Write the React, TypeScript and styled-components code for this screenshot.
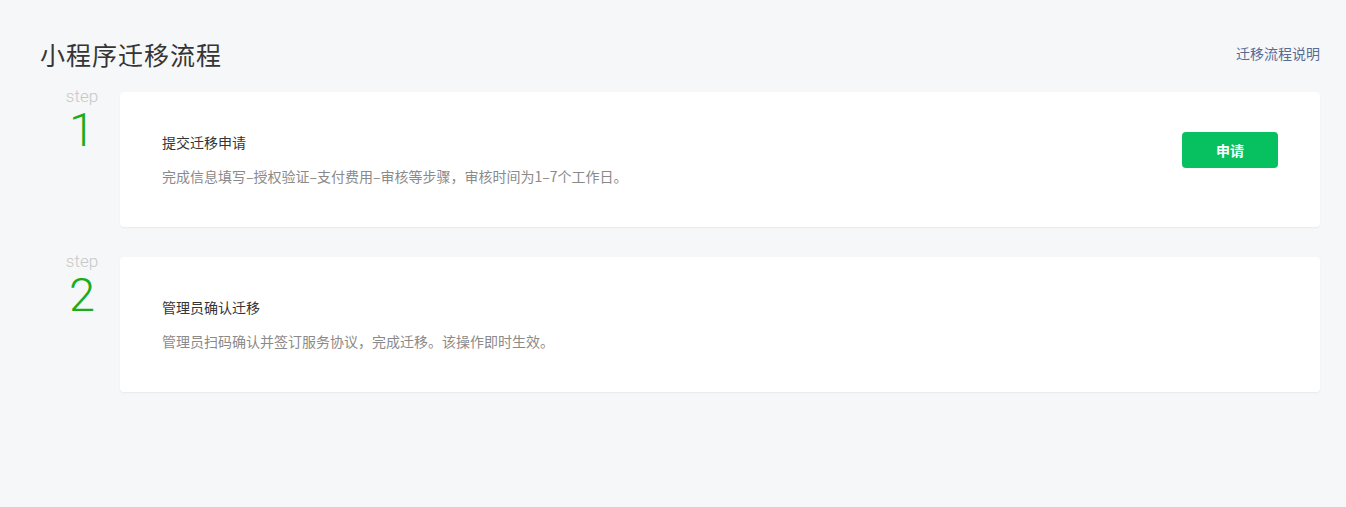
import React from "react";
import styled, { createGlobalStyle } from "styled-components";

const GlobalStyle = createGlobalStyle`
  html, body {
    margin: 0;
    padding: 0;
    background: #f6f7f9;
    font-family: "Noto Sans CJK SC", "Noto Sans", sans-serif;
  }
`;

const Page = styled.div`
  padding: 32px 26px 0 40px;
  min-height: 475px;
  box-sizing: border-box;
`;

const Header = styled.header`
  display: flex;
  justify-content: space-between;
  align-items: center;
  height: 44px;
  margin-bottom: 16px;
`;

const Title = styled.h1`
  margin: 0;
  font-size: 25px;
  font-weight: 400;
  color: #353535;
  letter-spacing: 1px;
`;

const HelpLink = styled.a`
  font-size: 14px;
  color: #576b95;
  text-decoration: none;
  margin-top: -2px;
`;

const Steps = styled.ol`
  list-style: none;
  margin: 0;
  padding: 0;
  display: flex;
  flex-direction: column;
  gap: 30px;
`;

const StepRow = styled.li`
  display: flex;
`;

const StepLabel = styled.div`
  width: 80px;
  flex-shrink: 0;
  display: flex;
  flex-direction: column;
  align-items: center;
  padding-left: 4px;
  box-sizing: border-box;
`;

const StepWord = styled.div`
  font-family: Roboto, "Liberation Sans", sans-serif;
  font-size: 17px;
  font-weight: 300;
  color: #c8c8c8;
  line-height: 18px;
  height: 18px;
  margin-top: -5px;
`;

const StepNumber = styled.div`
  font-family: Roboto, "Liberation Sans", sans-serif;
  font-size: 47px;
  font-weight: 300;
  color: #1aad19;
  line-height: 40px;
  height: 40px;
  margin-top: 5px;
`;

const Card = styled.div`
  flex: 1;
  background: #fff;
  border-radius: 4px;
  box-shadow: 0 1px 2px rgba(0, 0, 0, 0.06);
  display: flex;
  align-items: center;
  justify-content: space-between;
  height: 135px;
  padding: 0 42px;
  box-sizing: border-box;
`;

const CardBody = styled.div`
  display: flex;
  flex-direction: column;
  gap: 14px;
  margin-top: -2px;
`;

const CardTitle = styled.h2`
  margin: 0;
  font-size: 14px;
  font-weight: 400;
  color: #353535;
  line-height: 20px;
`;

const CardDesc = styled.p`
  margin: 0;
  font-size: 14px;
  color: #8a8a8a;
  line-height: 20px;
`;

const Button = styled.button`
  align-self: flex-start;
  margin-top: 40px;
  width: 96px;
  height: 36px;
  border: none;
  border-radius: 4px;
  background: #07c160;
  color: #fff;
  font-family: inherit;
  font-size: 14px;
  font-weight: 700;
  cursor: pointer;
`;

const steps = [
  {
    title: "提交迁移申请",
    desc: "完成信息填写–授权验证–支付费用–审核等步骤，审核时间为1–7个工作日。",
    action: "申请",
  },
  {
    title: "管理员确认迁移",
    desc: "管理员扫码确认并签订服务协议，完成迁移。该操作即时生效。",
  },
];

export default function App() {
  return (
    <>
      <GlobalStyle />
      <Page>
        <Header>
          <Title>小程序迁移流程</Title>
          <HelpLink href="#">迁移流程说明</HelpLink>
        </Header>
        <Steps>
          {steps.map((s, i) => (
            <StepRow key={s.title}>
              <StepLabel>
                <StepWord>step</StepWord>
                <StepNumber>{i + 1}</StepNumber>
              </StepLabel>
              <Card>
                <CardBody>
                  <CardTitle>{s.title}</CardTitle>
                  <CardDesc>{s.desc}</CardDesc>
                </CardBody>
                {s.action && <Button>{s.action}</Button>}
              </Card>
            </StepRow>
          ))}
        </Steps>
      </Page>
    </>
  );
}
